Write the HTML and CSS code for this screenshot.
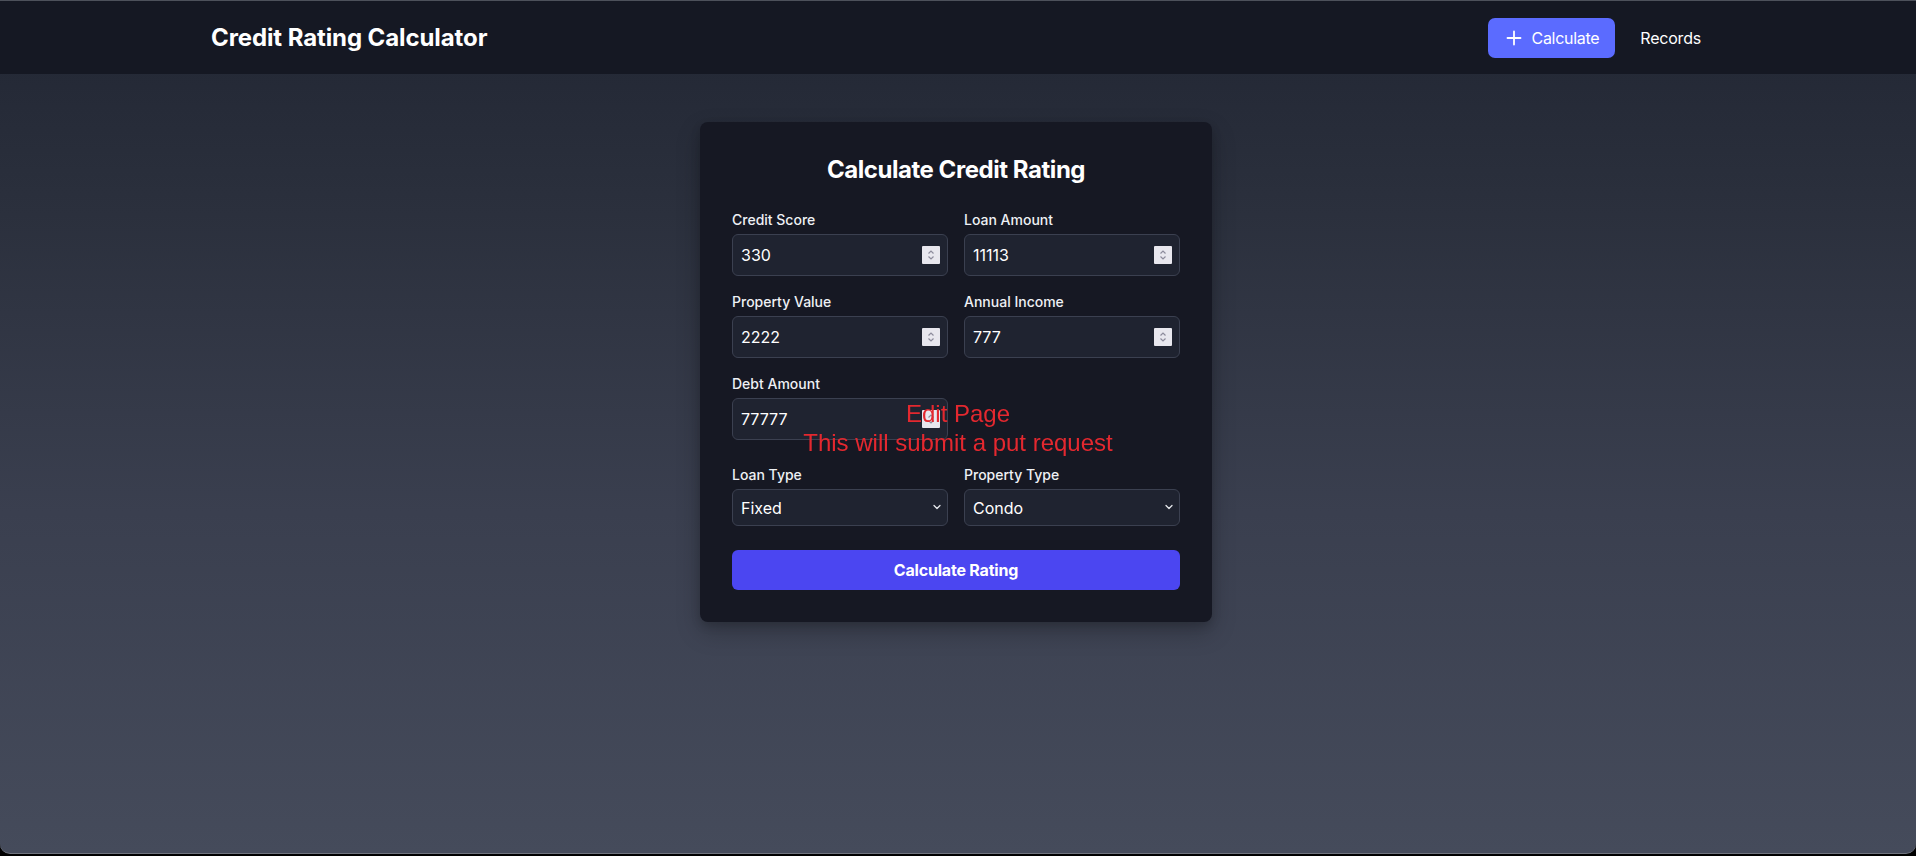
FILE: index.html
```html
<!DOCTYPE html>
<html lang="en">
<head>
<meta charset="utf-8">
<title>Credit Rating Calculator</title>
<link rel="stylesheet" href="styles.css">
</head>
<body>
<div class="window">
  <header class="topbar">
    <div class="topbar-inner">
      <h1 class="brand">Credit Rating Calculator</h1>
      <nav class="nav">
        <a class="nav-primary" href="#">
          <svg class="plus" viewBox="0 0 20 20" width="20" height="20" aria-hidden="true"><path d="M10 3.5v13M3.5 10h13" stroke="#fff" stroke-width="1.8" stroke-linecap="round" fill="none"/></svg>
          <span>Calculate</span>
        </a>
        <a class="nav-link" href="#">Records</a>
      </nav>
    </div>
  </header>

  <main class="main">
    <form class="card">
      <h2 class="card-title">Calculate Credit Rating</h2>

      <div class="grid">
        <div class="field">
          <label class="label">Credit Score</label>
          <div class="input-wrap">
            <input class="input" type="text" value="330">
            <span class="spin"><svg viewBox="0 0 18 18" width="18" height="18"><path d="M6.5 7.5L9 5l2.5 2.5M6.5 10.5L9 13l2.5-2.5" stroke="#8d8c9c" stroke-width="1.2" fill="none"/></svg></span>
          </div>
        </div>
        <div class="field">
          <label class="label">Loan Amount</label>
          <div class="input-wrap">
            <input class="input" type="text" value="11113">
            <span class="spin"><svg viewBox="0 0 18 18" width="18" height="18"><path d="M6.5 7.5L9 5l2.5 2.5M6.5 10.5L9 13l2.5-2.5" stroke="#8d8c9c" stroke-width="1.2" fill="none"/></svg></span>
          </div>
        </div>
        <div class="field">
          <label class="label">Property Value</label>
          <div class="input-wrap">
            <input class="input" type="text" value="2222">
            <span class="spin"><svg viewBox="0 0 18 18" width="18" height="18"><path d="M6.5 7.5L9 5l2.5 2.5M6.5 10.5L9 13l2.5-2.5" stroke="#8d8c9c" stroke-width="1.2" fill="none"/></svg></span>
          </div>
        </div>
        <div class="field">
          <label class="label">Annual Income</label>
          <div class="input-wrap">
            <input class="input" type="text" value="777">
            <span class="spin"><svg viewBox="0 0 18 18" width="18" height="18"><path d="M6.5 7.5L9 5l2.5 2.5M6.5 10.5L9 13l2.5-2.5" stroke="#8d8c9c" stroke-width="1.2" fill="none"/></svg></span>
          </div>
        </div>
        <div class="field">
          <label class="label">Debt Amount</label>
          <div class="input-wrap">
            <input class="input" type="text" value="77777">
            <span class="spin"><svg viewBox="0 0 18 18" width="18" height="18"><path d="M6.5 7.5L9 5l2.5 2.5M6.5 10.5L9 13l2.5-2.5" stroke="#8d8c9c" stroke-width="1.2" fill="none"/></svg></span>
          </div>
        </div>
      </div>

      <div class="grid grid-selects">
        <div class="field">
          <label class="label">Loan Type</label>
          <div class="select-wrap">
            <select class="select"><option>Fixed</option><option>Variable</option></select>
            <svg class="chev" viewBox="0 0 10 10" width="10" height="10"><path d="M2 3.5L5 6.5 8 3.5" stroke="#e5e7eb" stroke-width="1.3" fill="none" stroke-linecap="round" stroke-linejoin="round"/></svg>
          </div>
        </div>
        <div class="field">
          <label class="label">Property Type</label>
          <div class="select-wrap">
            <select class="select"><option>Condo</option><option>House</option></select>
            <svg class="chev" viewBox="0 0 10 10" width="10" height="10"><path d="M2 3.5L5 6.5 8 3.5" stroke="#e5e7eb" stroke-width="1.3" fill="none" stroke-linecap="round" stroke-linejoin="round"/></svg>
          </div>
        </div>
      </div>

      <button class="submit" type="button">Calculate Rating</button>
    </form>
  </main>

  <div class="edit-note">
    <div>Edit Page</div>
    <div>This will submit a put request</div>
  </div>
</div>
</body>
</html>
```

FILE: styles.css
```css
* { box-sizing: border-box; }

html, body {
  margin: 0;
  padding: 0;
  height: 100%;
}

body {
  background: #000;
  font-family: Inter, "Noto Sans", "Liberation Sans", sans-serif;
  color: #fff;
  overflow: hidden;
}

.window {
  height: 854px;
  display: flex;
  flex-direction: column;
  background: linear-gradient(to bottom, #212633 0%, #2b303d 25%, #3a3f4f 60%, #454b5b 100%);
  border-top: 1px solid #4d515b;
  border-bottom: 1px solid #70747e;
  border-radius: 0 0 10px 10px;
  overflow: hidden;
}

.topbar {
  height: 73px;
  flex: 0 0 73px;
  background: #151823;
  display: flex;
  align-items: center;
  padding: 0 207px 0 211px;
}

.topbar-inner {
  flex: 1;
  display: flex;
  align-items: center;
  justify-content: space-between;
}

.brand {
  margin: 0;
  font-size: 24px;
  line-height: 32px;
  font-weight: 700;
  color: #fff;
  letter-spacing: -0.1px;
}

.nav {
  display: flex;
  align-items: center;
  gap: 17px;
}

.nav-primary {
  display: flex;
  align-items: center;
  gap: 8px;
  height: 40px;
  padding: 0 16px;
  background: #5b6bff;
  border-radius: 7px;
  color: #fff;
  text-decoration: none;
  font-size: 16px;
  letter-spacing: -0.3px;
}

.plus { display: block; }

.nav-link {
  padding: 8px;
  color: #fff;
  text-decoration: none;
  font-size: 16px;
  letter-spacing: -0.2px;
}

.main {
  flex: 1;
  padding-top: 48px;
  padding-right: 4px;
  display: flex;
  justify-content: center;
  align-items: flex-start;
}

.card {
  width: 512px;
  padding: 32px;
  background: #161823;
  border-radius: 8px;
  box-shadow: 0 10px 25px rgba(0, 0, 0, 0.22), 0 4px 10px rgba(0, 0, 0, 0.15);
}

.card-title {
  margin: 0 0 24px;
  font-size: 24px;
  line-height: 32px;
  font-weight: 700;
  text-align: center;
  color: #fff;
  letter-spacing: -0.45px;
}

.grid {
  display: grid;
  grid-template-columns: 1fr 1fr;
  gap: 16px;
}

.grid-selects {
  margin-top: 25px;
}

.field {
  display: flex;
  flex-direction: column;
}

.label {
  font-size: 14px;
  line-height: 20px;
  font-weight: 500;
  color: #eef0f4;
  margin-bottom: 4px;
}

.input-wrap,
.select-wrap {
  position: relative;
}

.input {
  width: 100%;
  height: 42px;
  padding: 8px;
  background: #1f2330;
  border: 1px solid #3b4050;
  border-radius: 6px;
  color: #fff;
  font-family: inherit;
  font-size: 16px;
  line-height: 24px;
  outline: none;
}

.spin {
  position: absolute;
  right: 8px;
  top: 12px;
  width: 18px;
  height: 18px;
  background: #e8e7ee;
  border-radius: 1px;
}

.spin svg { display: block; }

.select {
  width: 100%;
  height: 37px;
  padding: 0 8px;
  background: #1f2330;
  border: 1px solid #3b4050;
  border-radius: 6px;
  color: #fff;
  font-family: inherit;
  font-size: 16px;
  -webkit-appearance: none;
  appearance: none;
  outline: none;
}

.chev {
  position: absolute;
  right: 6px;
  top: 13px;
  pointer-events: none;
}

.submit {
  display: block;
  width: 100%;
  height: 40px;
  margin-top: 24px;
  background: #4b46f1;
  border: 0;
  border-radius: 6px;
  color: #fff;
  font-family: inherit;
  font-size: 16px;
  font-weight: 700;
  letter-spacing: -0.2px;
}

.edit-note {
  position: fixed;
  left: 50%;
  top: 50%;
  transform: translate(-50%, -50%);
  text-align: center;
  color: #e4282f;
  font-family: "Liberation Sans", Arial, sans-serif;
  font-size: 24px;
  line-height: 28.5px;
  white-space: nowrap;
  pointer-events: none;
}
```
